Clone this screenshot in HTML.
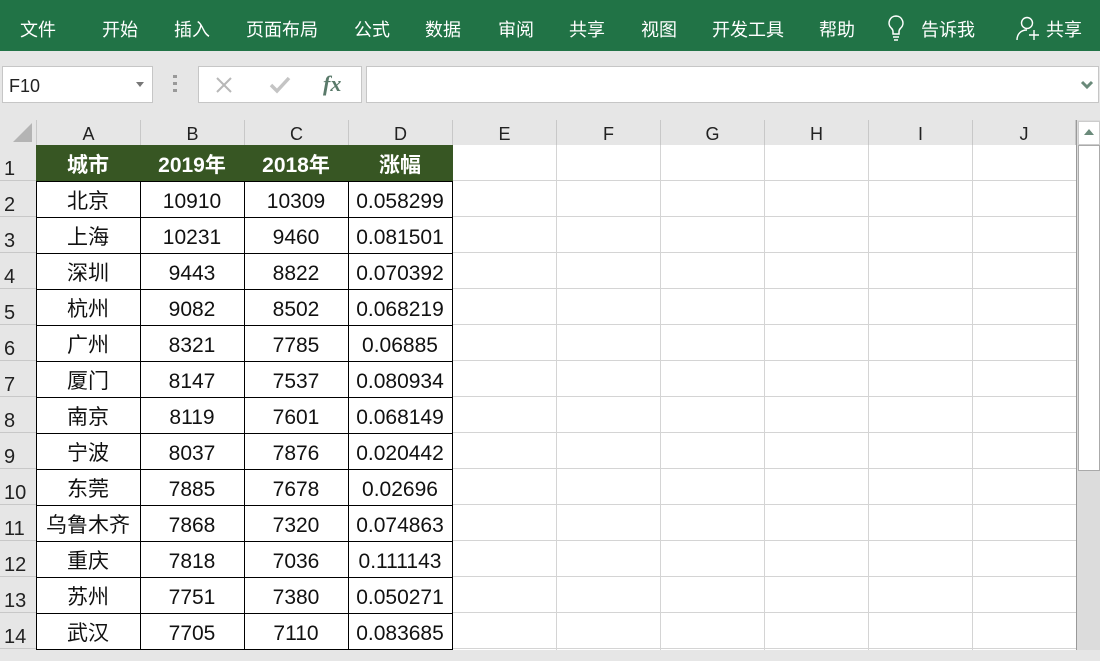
<!DOCTYPE html>
<html><head><meta charset="utf-8"><style>
*{margin:0;padding:0;box-sizing:border-box}
body{width:1100px;height:650px;overflow:hidden;background:#e6e6e6;font-family:"Liberation Sans","Noto Sans CJK SC",sans-serif;position:relative}
.rib{position:absolute;left:0;top:0;width:1100px;height:51px;background:#217346;color:#fff;font-size:18px}
.rib span{position:absolute;top:16px}
.box{position:absolute;background:#fff;border:1px solid #c6c6c6}
.colh{position:absolute;top:120px;height:26px;width:104px;text-align:center;font-size:18px;line-height:28px;color:#222;border-right:1px solid #c8c8c8;border-bottom:1px solid #a0a0a0}
.grid{position:absolute;left:37px;top:145px;width:1039px;height:505px;background-color:#fff;
background-image:repeating-linear-gradient(to right,transparent 0 103px,#d4d4d4 103px 104px),repeating-linear-gradient(to bottom,transparent 0 35px,#d4d4d4 35px 36px)}
.rowh{position:absolute;left:0;width:37px;height:36px;background:#e6e6e6;border-bottom:1px solid #c8c8c8;border-right:1px solid #a0a0a0;font-size:20px;color:#222;padding-left:4px;line-height:48px}
.tbl{position:absolute;left:36px;top:145px;width:417px;height:505px;
background-image:repeating-linear-gradient(to right,#000 0 1px,transparent 1px 104px),repeating-linear-gradient(to bottom,#000 0 1px,transparent 1px 36px);background-color:#fff}
.r{display:flex;height:36px}
.r div{width:104px;text-align:center;line-height:42px;font-size:21px;color:#111}
.hd{background:#375623}
.hd div{color:#fff;font-weight:bold}
</style></head><body>
<div class="rib">
<span style="left:20px">文件</span><span style="left:102px">开始</span><span style="left:174px">插入</span><span style="left:246px">页面布局</span><span style="left:354px">公式</span><span style="left:425px">数据</span><span style="left:498px">审阅</span><span style="left:569px">共享</span><span style="left:641px">视图</span><span style="left:712px">开发工具</span><span style="left:819px">帮助</span><span style="left:921px">告诉我</span><span style="left:1046px">共享</span>
<svg style="position:absolute;left:885px;top:14px" width="22" height="28" viewBox="0 0 22 28"><path d="M11 2a7 7 0 0 0-4.5 12.3c1 1 1.5 2 1.5 3.5V20h6v-2.2c0-1.5.5-2.5 1.5-3.5A7 7 0 0 0 11 2z" fill="none" stroke="#fff" stroke-width="1.5"/><path d="M8 23h6M9 26h4" stroke="#fff" stroke-width="1.5"/></svg>
<svg style="position:absolute;left:1015px;top:15px" width="26" height="26" viewBox="0 0 26 26"><circle cx="12" cy="8" r="5.5" fill="none" stroke="#fff" stroke-width="1.4"/><path d="M2 25c0-6 4-10 10-10" fill="none" stroke="#fff" stroke-width="1.4"/><path d="M19 15v10M14 20h10" stroke="#fff" stroke-width="1.4"/></svg>
</div>
<div class="box" style="left:2px;top:66px;width:151px;height:37px;font-size:18px;padding:9px 6px;color:#222">F10<span style="position:absolute;right:8px;top:15px;border:4px solid transparent;border-top:5px solid #777"></span></div>
<div style="position:absolute;left:173px;top:75px;width:4px;height:18px;background:repeating-linear-gradient(#999 0 3px,transparent 3px 7px)"></div>
<div class="box" style="left:198px;top:66px;width:164px;height:37px">
<svg style="position:absolute;left:16px;top:9px" width="18" height="18"><path d="M2 2l14 14M16 2L2 16" stroke="#b8b8b8" stroke-width="2"/></svg>
<svg style="position:absolute;left:70px;top:9px" width="22" height="18"><path d="M2 9l6 6L20 2" stroke="#c4c4c4" stroke-width="3.5" fill="none"/></svg>
<span style="position:absolute;left:124px;top:4px;font-family:'Liberation Serif',serif;font-style:italic;font-weight:bold;font-size:22px;color:#5a7a6a">fx</span>
</div>
<div class="box" style="left:366px;top:66px;width:733px;height:37px"><svg style="position:absolute;right:4px;top:12px" width="14" height="12"><path d="M2 3l5 5 5-5" stroke="#6a8a7a" stroke-width="3" fill="none"/></svg></div>
<div style="position:absolute;left:0;top:120px;width:37px;height:26px;border-right:1px solid #c8c8c8;border-bottom:1px solid #a0a0a0"><svg style="position:absolute;left:13px;top:3px" width="20" height="20"><path d="M19 0V19H0z" fill="#b4b4b4"/></svg></div>
<div class="colh" style="left:37px">A</div><div class="colh" style="left:141px">B</div><div class="colh" style="left:245px">C</div><div class="colh" style="left:349px">D</div><div class="colh" style="left:453px">E</div><div class="colh" style="left:557px">F</div><div class="colh" style="left:661px">G</div><div class="colh" style="left:765px">H</div><div class="colh" style="left:869px">I</div><div class="colh" style="left:973px;width:103px">J</div>
<div class="grid"></div>
<div class="rowh" style="top:145px">1</div><div class="rowh" style="top:181px">2</div><div class="rowh" style="top:217px">3</div><div class="rowh" style="top:253px">4</div><div class="rowh" style="top:289px">5</div><div class="rowh" style="top:325px">6</div><div class="rowh" style="top:361px">7</div><div class="rowh" style="top:397px">8</div><div class="rowh" style="top:433px">9</div><div class="rowh" style="top:469px">10</div><div class="rowh" style="top:505px">11</div><div class="rowh" style="top:541px">12</div><div class="rowh" style="top:577px">13</div><div class="rowh" style="top:613px">14</div>
<div class="tbl">
<div class="r hd"><div>城市</div><div>2019年</div><div>2018年</div><div>涨幅</div></div>
<div class="r"><div>北京</div><div>10910</div><div>10309</div><div>0.058299</div></div>
<div class="r"><div>上海</div><div>10231</div><div>9460</div><div>0.081501</div></div>
<div class="r"><div>深圳</div><div>9443</div><div>8822</div><div>0.070392</div></div>
<div class="r"><div>杭州</div><div>9082</div><div>8502</div><div>0.068219</div></div>
<div class="r"><div>广州</div><div>8321</div><div>7785</div><div>0.06885</div></div>
<div class="r"><div>厦门</div><div>8147</div><div>7537</div><div>0.080934</div></div>
<div class="r"><div>南京</div><div>8119</div><div>7601</div><div>0.068149</div></div>
<div class="r"><div>宁波</div><div>8037</div><div>7876</div><div>0.020442</div></div>
<div class="r"><div>东莞</div><div>7885</div><div>7678</div><div>0.02696</div></div>
<div class="r"><div>乌鲁木齐</div><div>7868</div><div>7320</div><div>0.074863</div></div>
<div class="r"><div>重庆</div><div>7818</div><div>7036</div><div>0.111143</div></div>
<div class="r"><div>苏州</div><div>7751</div><div>7380</div><div>0.050271</div></div>
<div class="r"><div>武汉</div><div>7705</div><div>7110</div><div>0.083685</div></div>
</div>
<div style="position:absolute;left:1076px;top:120px;width:24px;height:530px;background:#dcdcdc;border-left:1px solid #999"></div>
<div style="position:absolute;left:1078px;top:121px;width:22px;height:24px;background:#fff;border:1px solid #ccc"><span style="position:absolute;left:5px;top:7px;border:5px solid transparent;border-bottom:6px solid #6a8a7a;border-top:0"></span></div>
<div style="position:absolute;left:1078px;top:145px;width:22px;height:326px;background:#fff;border:1px solid #aaa"></div>
</body></html>
